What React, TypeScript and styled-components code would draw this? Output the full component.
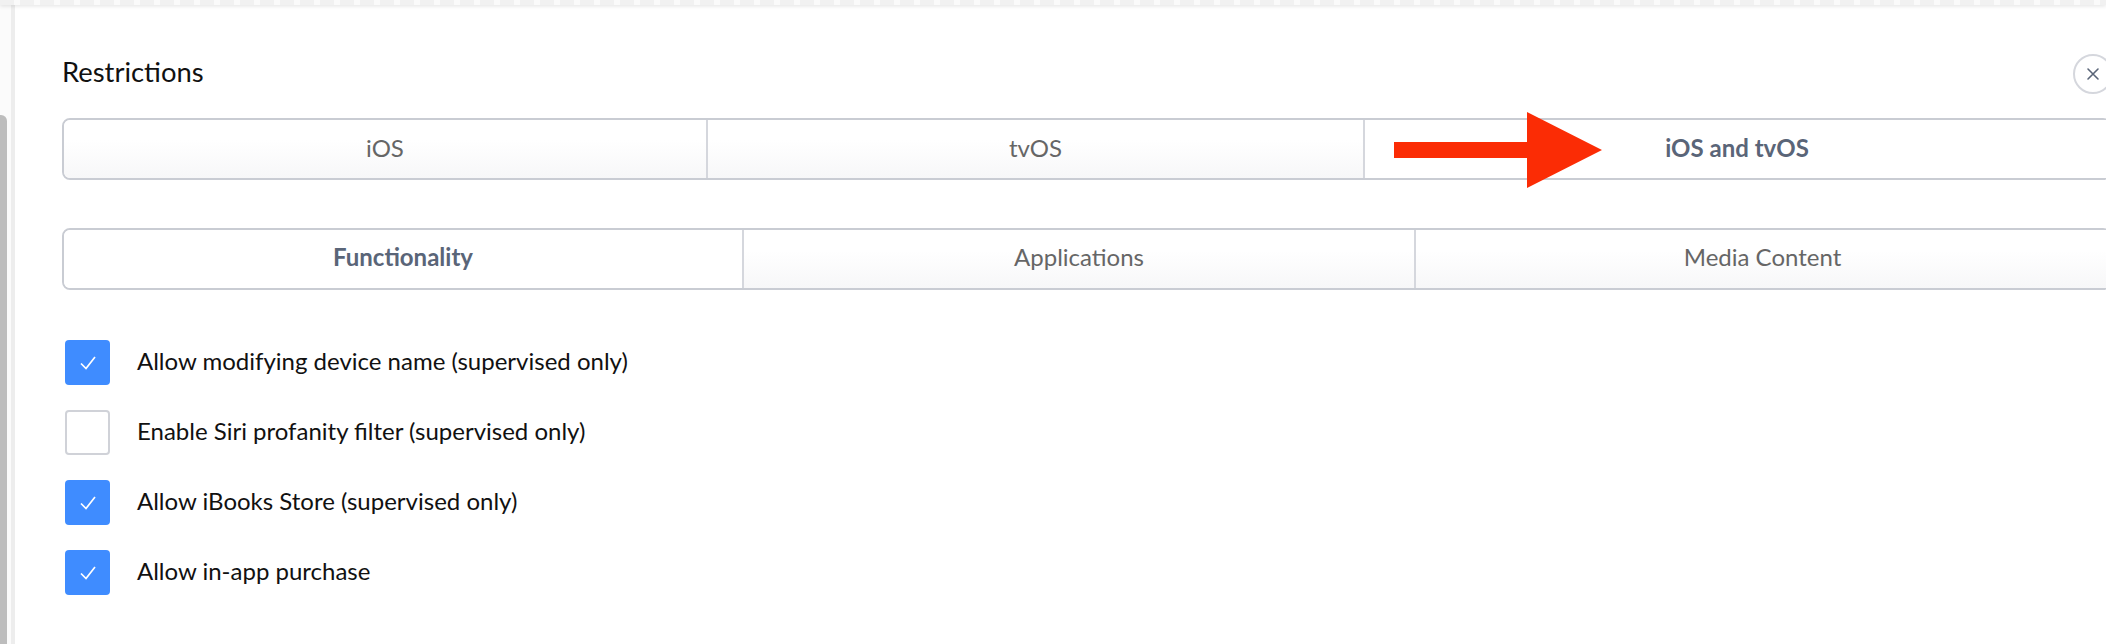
import styled, { createGlobalStyle } from "styled-components";

const GlobalStyle = createGlobalStyle`
    html, body {
        margin: 0;
        background: #fff;
        overflow: hidden;
    }
    body {
        font-family: Lato, "Liberation Sans", sans-serif;
        color: #111;
    }
`

type Option = {
    label: string
    checked: boolean
}

const options: Option[] = [
    { label: "Allow modifying device name (supervised only)", checked: true },
    { label: "Enable Siri profanity filter (supervised only)", checked: false },
    { label: "Allow iBooks Store (supervised only)", checked: true },
    { label: "Allow in-app purchase", checked: true },
]

export default function App() {
    return (
        <Page>
            <GlobalStyle />
            <TopStrip />
            <Body>
                <Gutter>
                    <Thumb />
                </Gutter>
                <Panel>
                    <Header>
                        <Title>Restrictions</Title>
                        <CloseButton aria-label="Close">
                            <svg width="14" height="14" viewBox="0 0 14 14">
                                <path d="M2 2 L12 12 M12 2 L2 12" stroke="#5a6578" strokeWidth="1.6" strokeLinecap="round" />
                            </svg>
                        </CloseButton>
                    </Header>
                    <PlatformTabs>
                        <Tab>iOS</Tab>
                        <Tab>tvOS</Tab>
                        <Tab $active>iOS and tvOS</Tab>
                        <Arrow width="208" height="76" viewBox="0 0 208 76">
                            <path d="M0 30 H133 V0 L208 38 L133 76 V46 H0 Z" fill="#fb2c05" />
                        </Arrow>
                    </PlatformTabs>
                    <SectionTabs>
                        <Tab $active>Functionality</Tab>
                        <Tab>Applications</Tab>
                        <Tab>Media Content</Tab>
                    </SectionTabs>
                    <OptionList>
                        {options.map((option) => (
                            <OptionRow key={option.label}>
                                <Box $checked={option.checked}>
                                    {option.checked && (
                                        <svg width="16" height="14" viewBox="0 0 16 14">
                                            <path d="M1 7.5 L6 12.5 L15 1" fill="none" stroke="#fff" strokeWidth="1.7" />
                                        </svg>
                                    )}
                                </Box>
                                <Label>{option.label}</Label>
                            </OptionRow>
                        ))}
                    </OptionList>
                </Panel>
            </Body>
        </Page>
    );
}

const Page = styled.div`
    width: 2106px;
    height: 644px;
    overflow: hidden;
    display: flex;
    flex-direction: column;
`

const TopStrip = styled.div`
    height: 5px;
    flex-shrink: 0;
    background: repeating-linear-gradient(90deg, #f1f1f1 0 14px, #fafafa 14px 20px);
    box-shadow: 0 1px 4px rgba(0, 0, 0, 0.12);
    position: relative;
`

const Body = styled.div`
    flex: 1;
    display: flex;
    min-height: 0;
`

const Gutter = styled.div`
    width: 11px;
    flex-shrink: 0;
    background: #fbfbfb;
    border-right: 4px solid #ededed;
    padding-top: 110px;
`

const Thumb = styled.div`
    width: 7px;
    height: 100%;
    background: #bdbdbd;
    border-top-right-radius: 6px;
`

const Panel = styled.div`
    width: 2091px;
    padding: 49px 0 0 47px;
    box-sizing: border-box;
    display: flex;
    flex-direction: column;
`

const Header = styled.div`
    width: 2051px;
    height: 40px;
    display: flex;
    align-items: center;
    justify-content: space-between;
`

const Title = styled.h1`
    margin: 0 0 4px;
    font-size: 27.4px;
    font-weight: 400;
    line-height: 1;
    color: #111;
`

const CloseButton = styled.button`
    width: 40px;
    height: 40px;
    padding: 0;
    border: 2px solid #d5d7dd;
    border-radius: 50%;
    background: #fff;
    display: flex;
    align-items: center;
    justify-content: center;
`

const Tab = styled.div<{ $active?: boolean }>`
    display: flex;
    align-items: center;
    justify-content: center;
    padding-bottom: 4px;
    font-size: 24px;
    font-weight: ${(props) => (props.$active ? 700 : 400)};
    color: ${(props) => (props.$active ? "#5a6578" : "#666")};
    background: ${(props) => (props.$active ? "#fff" : "linear-gradient(#fff 35%, #f7f7f8)")};
    border-radius: 6px 0 0 6px;

    & + & {
        border-left: 2px solid #d5d7dd;
        border-radius: 0;
    }
`

const TabRow = styled.div`
    position: relative;
    width: 2049px;
    height: 62px;
    box-sizing: border-box;
    display: grid;
    border: 2px solid #c9ccd3;
    border-radius: 8px;
`

const PlatformTabs = styled(TabRow)`
    margin-top: 24px;
    grid-template-columns: 642px 657px 1fr;
`

const SectionTabs = styled(TabRow)`
    margin-top: 48px;
    grid-template-columns: 678px 672px 1fr;

    ${Tab} {
        padding-bottom: 6px;
    }
`

const Arrow = styled.svg`
    position: absolute;
    left: 1330px;
    top: -8px;
`

const OptionList = styled.div`
    margin-top: 50px;
    padding-left: 3px;
    display: flex;
    flex-direction: column;
    gap: 25px;
`

const OptionRow = styled.label`
    display: flex;
    align-items: center;
    gap: 27px;
`

const Box = styled.span<{ $checked: boolean }>`
    width: 45px;
    height: 45px;
    box-sizing: border-box;
    display: flex;
    align-items: center;
    justify-content: center;
    border-radius: 4px;
    background: ${(props) => (props.$checked ? "#3f8cff" : "#fff")};
    border: ${(props) => (props.$checked ? "none" : "2px solid #d0d2d8")};
`

const Label = styled.span`
    font-size: 24px;
    color: #111;
    padding-bottom: 4px;
`
